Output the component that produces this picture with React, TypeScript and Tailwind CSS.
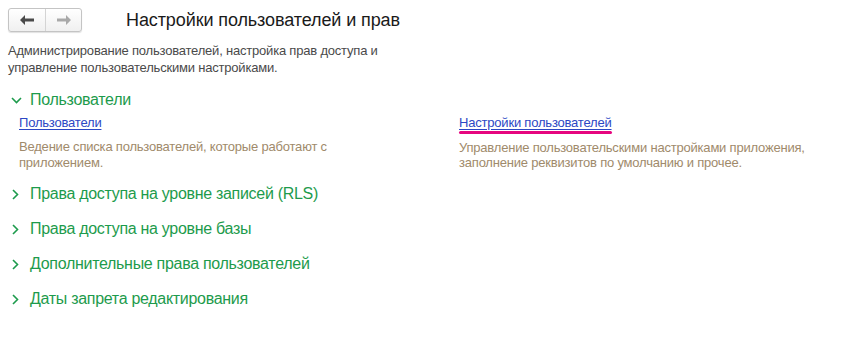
import React from "react";

const green = "text-[#1d9b4c]";

const ChevronDown = () => (
  <svg width="11" height="7" viewBox="0 0 11 7" className="shrink-0">
    <path d="M1 1l4.5 4.5L10 1" fill="none" stroke="#1d9b4c" strokeWidth="1.6" />
  </svg>
);

const ChevronRight = () => (
  <svg width="7" height="11" viewBox="0 0 7 11" className="shrink-0">
    <path d="M1 1l4.5 4.5L1 10" fill="none" stroke="#1d9b4c" strokeWidth="1.6" />
  </svg>
);

const ArrowLeft = ({ color }: { color: string }) => (
  <svg width="14" height="10" viewBox="0 0 14 10">
    <path d="M0 5l5-5v3.5h9v3H5V10z" fill={color} />
  </svg>
);

const ArrowRight = ({ color }: { color: string }) => (
  <svg width="14" height="10" viewBox="0 0 14 10">
    <path d="M14 5L9 0v3.5H0v3h9V10z" fill={color} />
  </svg>
);

const collapsed = [
  "Права доступа на уровне записей (RLS)",
  "Права доступа на уровне базы",
  "Дополнительные права пользователей",
  "Даты запрета редактирования",
];

export default function App() {
  return (
    <div
      className="w-[854px] h-[351px] bg-white overflow-hidden"
      style={{ fontFamily: '"Liberation Sans", Arial, sans-serif' }}
    >
      {/* header */}
      <div className="flex items-center pl-2 pt-2">
        <div className="flex h-[24px] w-[74px] rounded-[3px] border border-[#c4c4c4] bg-gradient-to-b from-white to-[#f0f0f0] shadow-[0_1px_1px_rgba(0,0,0,0.12)]">
          <div className="flex w-[37px] items-center justify-center border-r border-[#d4d4d4]">
            <ArrowLeft color="#4a4a4a" />
          </div>
          <div className="flex flex-1 items-center justify-center">
            <ArrowRight color="#a9a9a9" />
          </div>
        </div>
        <h1 className="ml-[44px] text-[18px] leading-[22px] tracking-[-0.1px] text-[#1a1a1a]">
          Настройки пользователей и прав
        </h1>
      </div>

      <p className="mt-[10px] pl-2 text-[13px] leading-[17px] tracking-[-0.2px] text-[#4a4a4a]">
        Администрирование пользователей, настройка прав доступа и
        <br />
        управление пользовательскими настройками.
      </p>

      {/* expanded group */}
      <div className="mt-[14px] flex h-[20px] items-center pl-[11px]">
        <ChevronDown />
        <span className={`ml-[8px] text-[16px] leading-[20px] tracking-[-0.3px] ${green}`}>
          Пользователи
        </span>
      </div>

      <div className="mt-[5px] flex pl-[19px] text-[13px] leading-[16px] tracking-[-0.2px]">
        <div className="w-[440px]">
          <a className="text-[#2c47c4] underline underline-offset-[2px]">Пользователи</a>
          <p className="mt-[8px] text-[#a08a6b]">
            Ведение списка пользователей, которые работают с
            <br />
            приложением.
          </p>
        </div>
        <div>
          <div className="inline-flex flex-col">
            <a className="text-[#2c47c4] underline underline-offset-[2px]">Настройки пользователей</a>
            <div className="h-[3px] rounded-full bg-[#e6067f]" />
          </div>
          <p className="mt-[6px] leading-[15px] text-[#a08a6b]">
            Управление пользовательскими настройками приложения,
            <br />
            заполнение реквизитов по умолчанию и прочее.
          </p>
        </div>
      </div>

      {/* collapsed groups */}
      <div className="mt-[13px] flex flex-col gap-[15px]">
        {collapsed.map((t) => (
          <div key={t} className="flex h-[20px] items-center pl-[12px]">
            <ChevronRight />
            <span className={`ml-[11px] text-[16px] leading-[20px] tracking-[-0.3px] ${green}`}>{t}</span>
          </div>
        ))}
      </div>
    </div>
  );
}
